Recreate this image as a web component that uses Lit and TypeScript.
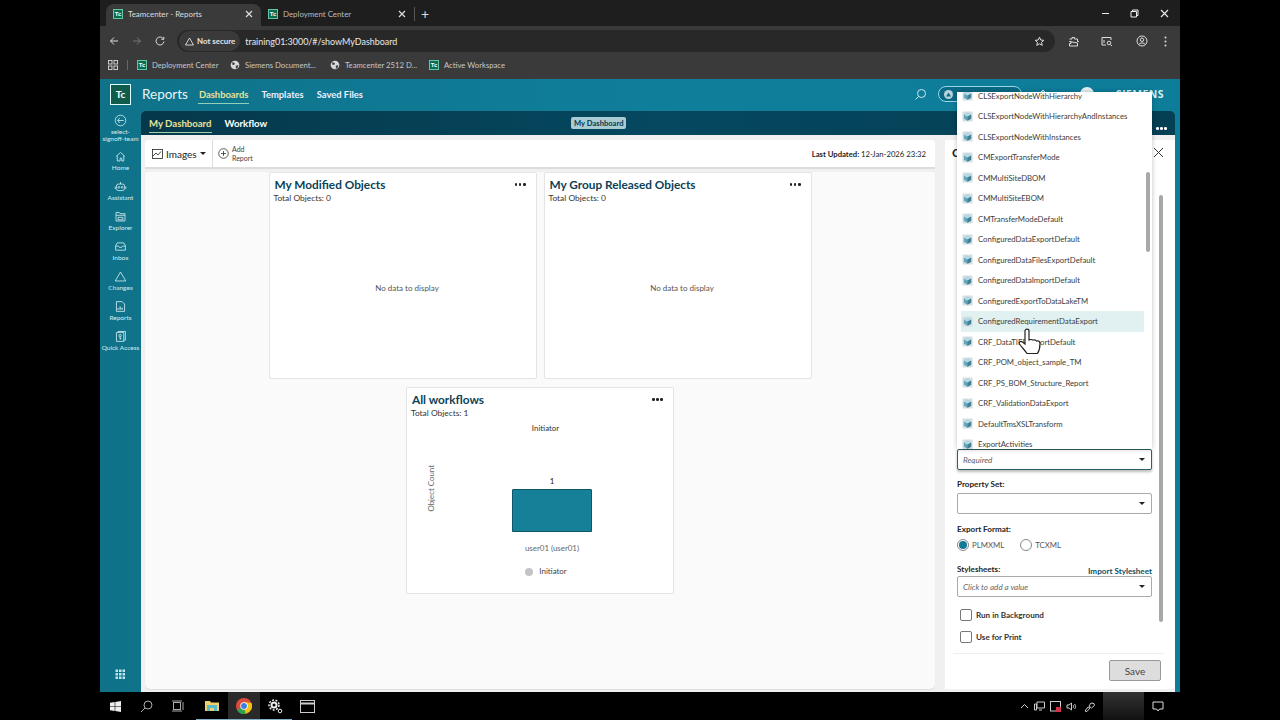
import { LitElement, html, css, svg } from "lit";
import { customElement } from "lit/decorators.js";

const tcIcon = (s: number) => html`<span class="tc" style="width:${s}px;height:${s}px"><i>Tc</i></span>`;
const globe = html`<svg class="b-ic" viewBox="0 0 12 12"><circle cx="6" cy="6" r="5.2" fill="#d8d8d8"/><path d="M3 2.5l3 1.5-1 2-2.5-.5zM7 7l3-1-1 3.5-2 1z" fill="#3c3c3c"/></svg>`;

const items = [
  "CLSExportNodeWithHierarchy","CLSExportNodeWithHierarchyAndInstances","CLSExportNodeWithInstances","CMExportTransferMode",
  "CMMultiSiteDBOM","CMMultiSiteEBOM","CMTransferModeDefault","ConfiguredDataExportDefault","ConfiguredDataFilesExportDefault",
  "ConfiguredDataImportDefault","ConfiguredExportToDataLakeTM","ConfiguredRequirementDataExport","CRF_DataTIERExportDefault",
  "CRF_POM_object_sample_TM","CRF_PS_BOM_Structure_Report","CRF_ValidationDataExport","DefaultTmsXSLTransform","ExportActivities",
];

const stroke = (p: unknown) => html`<svg class="nav-ic" viewBox="0 0 16 16" fill="none" stroke="#d5eef3" stroke-width="1">${p}</svg>`;
const nav = [
  ["Home", stroke(svg`<path d="M2.5 8L8 3l5.5 5M4 7v6.5h3.5V10h2v3.5H12V7"/>`)],
  ["Assistant", stroke(svg`<rect x="3" y="5" width="10" height="8" rx="2.5"/><circle cx="6" cy="9" r="1"/><circle cx="10" cy="9" r="1"/><path d="M8 5V2.5M1.5 8v3M14.500 8v3"/>`)],
  ["Explorer", stroke(svg`<path d="M2.500 13.500V3h4l1 1.500h6v9z"/><path d="M2.500 6.500h11M5 9h6v3H5z"/>`)],
  ["Inbox", stroke(svg`<path d="M2 7l2-3.500h8L14 7v5.500H2zM2 7.500h3.500l1 1.500h3l1-1.500H14"/>`)],
  ["Changes", stroke(svg`<path d="M8 2.500l6.500 11h-13z"/>`)],
  ["Reports", stroke(svg`<path d="M3 14V2h7l3 3v9z"/><path d="M5 12v-2M7.500 12V8M10 12V9.500" stroke-width="1.400"/>`)],
  ["Quick Access", stroke(svg`<path d="M3 3h9v11H3zM5 3V1.800h9v10.700h-2"/><circle cx="7.500" cy="7" r="1.500"/><path d="M7.500 8.500V12M7.500 10.500h1.500"/>`)],
] as const;

const cube = html`<svg class="cube" viewBox="0 0 12 12"><rect x=".5" y=".5" width="11" height="11" rx="1" fill="#d3dfe3"/><path d="M6 2l4 2v4.500L6 10.500 2 8.500V4z" fill="#6aa5b8"/><path d="M6 2l4 2-4 2-4-2z" fill="#b6dbe5"/><path d="M6 6l4-2v4.500L6 10.500z" fill="#3f8199"/></svg>`;
const caret = html`<span class="caret"></span>`;
const dots = html`<span class="dots"><b></b><b></b><b></b></span>`;

@customElement("app-root")
export class AppRoot extends LitElement {
  static styles = css`
    :host { display: block; width: 1280px; height: 720px; background: #000; overflow: hidden; font-family: Lato, "Open Sans", "Liberation Sans", sans-serif; }
    .screen { position: relative; width: 1080px; height: 720px; margin-left: 100px; display: flex; flex-direction: column; }
    svg { display: block; flex: none; }

    .tabs { height: 26px; background: #1e1e1e; display: flex; align-items: flex-end; padding-left: 6px; color: #ddd; font-size: 7.900px; }
    .tab { width: 155px; height: 22px; display: flex; align-items: center; padding: 0 8px 3px 7px; box-sizing: border-box; gap: 5px; border-radius: 8px 8px 0 0; }
    .tab.on { background: #3a3a3a; }
    .tab .t { flex: 1; }
    .tab.off { width: 153px; color: #bbb; }
    .x { width: 8px; height: 8px; }
    .plus { color: #ddd; font-size: 14px; line-height: 14px; margin: 0 0 5px 0; padding-left: 6px; border-left: 1px solid #555; }
    .tc { display: inline-flex; flex: none; align-items: center; justify-content: center; background: #0d6b50; border: 1px solid #63c6a8; box-sizing: border-box; color: #fff; }
    .tc i { font: 700 6px "Liberation Sans", sans-serif; }
    .winbtns { margin-left: auto; display: flex; align-items: center; height: 26px; align-self: flex-start; padding-right: 1px; }
    .winbtns span { width: 29.500px; display: flex; justify-content: center; }

    .addr { height: 26px; box-sizing: border-box; padding: 4px 7px 0 9px; background: #3a3a3a; display: flex; align-items: center; color: #ddd; }
    .addr .nv { width: 23px; flex: none; }
    .pill { flex: 1; height: 22px; margin-left: -1px; background: #282828; border-radius: 11px; display: flex; align-items: center; font-size: 8.950px; padding-right: 10px; }
    .secure { height: 20px; display: flex; align-items: center; gap: 3px; background: #3a3a3a; border-radius: 10px; padding: 0 5px 0 6px; margin: 0 5px 0 2px; font-weight: 700; font-size: 7.900px; color: #e4e4e4; }
    .url { flex: 1; color: #e8e8e8; }
    .tools { display: flex; align-items: center; margin-left: 4px; }
    .tools span { display: flex; justify-content: center; }

    .marks { height: 27px; box-sizing: border-box; padding: 0 0 2px 8px; background: #3a3a3a; display: flex; align-items: center; font-size: 7.700px; color: #c8c8c8; }
    .mark { display: flex; align-items: center; gap: 5px; }
    .b-ic { width: 10px; height: 10px; }
    .sep { width: 1px; height: 10px; background: #666; margin: 0 9px; }

    .app { flex: 1; min-height: 0; display: flex; flex-direction: column; background: linear-gradient(90deg, #0f7289 0%, #0f7e9b 50%, #0d7d99 100%); color: #222; }
    .head { height: 32px; box-sizing: border-box; padding: 0 0 2px 10px; display: flex; align-items: center; color: #fff; flex: none; }
    .logo { width: 21px; height: 21px; font-size: 10px; display: flex; align-items: center; justify-content: center; background: #0f5c4c; border: 1px solid #dff; box-sizing: border-box; font-weight: 700; }
    .title { font-size: 13.500px; margin: 0 10px 0 11px; color: #e8f5f8; }
    .hnav { font-size: 9.400px; font-weight: 700; margin-right: 11px; padding: 4px 1px 3px; color: #eef; }
    .hnav.on { color: #e6e29a; border-bottom: 1.500px solid #8fd2b6; }
    .hright { margin-left: auto; display: flex; align-items: center; padding-right: 16px; }
    .proj { width: 84px; height: 16px; border: 1px solid #9ad6e6; border-radius: 9px; background: #0b6a85; margin-left: 11px; box-sizing: border-box; display: flex; align-items: center; padding-left: 5px; }
    .bell { margin-left: 16px; }
    .avatar { width: 14px; height: 14px; border-radius: 50%; background: #e6f2f5; margin: 0 22px 0 32px; }
    .siemens { font: 700 10.500px "Open Sans", sans-serif; color: #d8f0f5; letter-spacing: .4px; }

    .body { flex: 1; min-height: 0; display: flex; }
    .side { width: 41px; flex: none; display: flex; flex-direction: column; align-items: center; color: #d5eef3; font-size: 6.500px; line-height: 8px; text-align: center; padding-bottom: 12px; box-sizing: border-box; }
    .nv-item { display: flex; flex-direction: column; align-items: center; height: 30px; white-space: nowrap; }
    .nv-item.back { height: 36px; white-space: normal; margin-top: 3px; line-height: 7px; }
    .nav-ic { width: 13px; height: 13px; margin-bottom: 1px; }
    .grid { margin-top: auto; width: 11px; height: 11px; }

    .main { flex: 1; min-width: 0; display: flex; flex-direction: column; padding-right: 5px; }
    .sub { height: 24px; flex: none; background: linear-gradient(90deg, #06384b, #05485f 50%, #053f54); border-radius: 5px 5px 0 0; display: grid; grid-template-columns: 422px auto 1fr; align-items: center; color: #fff; padding: 0 8px 0 8px; }
    .subl { display: flex; gap: 13px; font-size: 9.600px; font-weight: 700; }
    .subl span { padding: 4px 0 3px; }
    .subl .on { color: #e6e29a; border-bottom: 1px solid #a0d0a8; }
    .chip { background: #a9cbd3; color: #06384b; font-size: 7.600px; font-weight: 700; padding: 1px 3px; border-radius: 2px; }
    .subr { justify-self: end; }
    .dots { display: inline-flex; gap: 1.500px; }
    .dots b { width: 2.600px; height: 2.600px; border-radius: 50%; background: currentColor; }
    .work { flex: 1; min-height: 0; background: #f1f0f0; display: flex; padding: 5px 0 3px 4px; gap: 10px; }

    .left { width: 790px; flex: none; display: flex; flex-direction: column; }
    .bar { height: 27px; flex: none; background: #fff; display: flex; align-items: center; border-bottom: 2px solid #dcdcdc; border-radius: 4px 4px 0 0; }
    .imgs { width: 68px; height: 100%; display: flex; align-items: center; gap: 3px; padding-left: 7px; box-sizing: border-box; font-size: 10px; border-right: 1px solid #ddd; color: #222; }
    .add { display: flex; align-items: center; gap: 3px; padding-left: 5px; font-size: 7px; line-height: 9px; color: #444; }
    .updated { margin-left: auto; font-size: 7.700px; font-weight: 700; color: #222; padding-right: 9px; }
    .updated em { font-style: normal; font-weight: 400; }
    .caret { width: 0; height: 0; border: 3px solid transparent; border-top: 3.500px solid #222; border-bottom: 0; }
    .dash { flex: 1; min-height: 0; margin-top: 3px; background: #fbfafa; border-radius: 0 0 5px 5px; display: flex; flex-wrap: wrap; justify-content: center; align-content: flex-start; gap: 8px 7px; box-shadow: 0 1px 1px #ddd; }
    .card { width: 268px; height: 207px; box-sizing: border-box; background: #fff; border: 1px solid #e4e4e4; border-radius: 2px; padding: 5px 10px 0 4px; display: flex; flex-direction: column; }
    .card h3 { margin: 0; padding-left: 1px; font-size: 11.800px; line-height: 14px; font-weight: 700; color: #0b4257; display: flex; justify-content: space-between; align-items: center; }
    .card h3 .dots { color: #222; margin-top: -1px; }
    .total { font-size: 8.400px; line-height: 11px; color: #333; margin-top: 1px; }
    .none { flex: 1; display: flex; align-items: center; justify-content: center; font-size: 8px; color: #555; padding: 0 0 6px 15px; }
    .chart { flex: 1; display: grid; grid-template-columns: 27px 1fr; grid-template-rows: auto 1fr; font-size: 7.900px; color: #555; }
    .chart-t { grid-column: 1 / 3; text-align: center; color: #333; margin: 3px 0 0 17px; line-height: 12px; }
    .ylab { writing-mode: vertical-rl; transform: rotate(180deg); align-self: start; margin: 31px 2px 0 0; justify-self: end; white-space: nowrap; line-height: 10px; color: #666; }
    .plot { display: flex; flex-direction: column; align-items: center; padding: 42px 0 0 74px; width: 80px; }
    .one { color: #222; line-height: 11px; }
    .rect { width: 80px; height: 43px; flex: none; background: #178099; border: 1px solid #0f566b; box-sizing: border-box; border-radius: 1px 1px 0 0; margin-top: 2px; }
    .ulab { margin-top: 11px; white-space: nowrap; line-height: 11px; color: #666; }
    .leg { margin-top: 12px; display: flex; align-items: center; gap: 6px; color: #444; line-height: 11px; margin-left: -12px; white-space: nowrap; }
    .leg i { width: 8px; height: 8px; border-radius: 50%; background: #c4c4c4; }

    .right { flex: 1; min-width: 0; background: #fff; position: relative; padding: 4px 11px 8px 12px; display: flex; flex-direction: column; box-sizing: border-box; }
    .rhead { display: flex; justify-content: space-between; align-items: center; height: 16px; margin-left: -5px; font-weight: 700; font-size: 12px; color: #222; }
    .spacer { flex: 1; }
    .form { width: 195px; font-size: 8.100px; font-weight: 700; color: #222; }
    .sel { height: 21px; box-sizing: border-box; border: 1px solid #aaa; border-radius: 2px; display: flex; align-items: center; justify-content: space-between; padding: 0 6px 0 5px; font-weight: 400; font-style: italic; color: #666; background: #fff; }
    .sel.focus { border: 1px solid #2f5f66; box-shadow: 0 2px 3px #bbb; }
    .lab { line-height: 11px; margin: 9px 0 3px; display: flex; justify-content: space-between; align-items: flex-end; }
    .lab a { font-weight: 700; color: #0b4f64; margin-bottom: -2px; }
    .lab.exp { margin-top: 10px; }
    .lab.sty { margin: 14px 0 1px; }
    .radios { display: flex; align-items: center; margin: 4px 0 -1px; font-size: 7.800px; font-weight: 400; color: #555; }
    .radio { width: 12px; height: 12px; border: 1px solid #888; border-radius: 50%; box-sizing: border-box; margin-right: 3px; display: flex; align-items: center; justify-content: center; }
    .radio.on::after { content: ""; width: 8px; height: 8px; border-radius: 50%; background: #157a96; }
    .rd2 { margin-left: 16px; }
    .chk { display: flex; align-items: center; gap: 4px; margin: 12px 0 0 3px; line-height: 12px; color: #333; }
    .chk i { width: 12px; height: 12px; border: 1px solid #777; border-radius: 2px; box-sizing: border-box; }
    .chk + .chk { margin-top: 10px; }
    .rule { height: 1px; background: #eee; margin-top: 10px; margin-left: -4px; }
    .footer { display: flex; justify-content: flex-end; margin: 6px 3px 0 0; }
    .save { width: 52px; height: 21px; background: #ddd; border: 1px solid #999; border-radius: 2px; font-size: 10px; color: #444; display: flex; align-items: center; justify-content: center; box-sizing: border-box; }
    .pscroll { position: absolute; left: 214px; top: 55px; width: 4px; height: 427px; background: #a8a8a8; border-radius: 2px; }

    .menu { position: absolute; left: 857px; top: 92px; width: 195px; height: 357px; background: #fff; overflow: hidden; box-shadow: 0 0 5px rgba(0,0,0,.25); padding: 0 8px 0 4px; box-sizing: border-box; font-size: 7.750px; color: #3c3c3c; }
    .rows { margin-top: -6.500px; }
    .row { height: 20.500px; display: flex; align-items: center; gap: 5px; padding-left: 1px; white-space: nowrap; }
    .row.hot { background: #e1f1f1; }
    .cube { width: 11px; height: 11px; }
    .mscroll { position: absolute; right: 2px; top: 80px; width: 4px; height: 80px; background: #a8a8a8; border-radius: 2px; }
    .hand { position: absolute; left: 918px; top: 328px; width: 24px; height: 30px; }

    .task { height: 28px; flex: none; background: #000; display: flex; align-items: center; color: #ddd; }
    .tk { width: 32px; height: 28px; display: flex; align-items: center; justify-content: center; box-sizing: border-box; }
    .tk.act { background: #2a2a2a; }
    .tk.run { box-shadow: inset 0 -1px #7fb0c8; }
    .tk.nar { width: 30px; }
    .tk.gap { margin-left: 3.500px; }
    .tray { margin-left: auto; display: flex; align-items: center; gap: 5px; padding-right: 16px; }
    .tray .pen { margin-left: 2px; }
    .tray .blur { width: 41px; height: 28px; background: linear-gradient(180deg, #333, #111); margin: 0 3px; }
  `;

  private card(title: string, total: string, body: unknown) {
    return html`<div class="card"><h3>${title}${dots}</h3><div class="total">Total Objects: ${total}</div>${body}</div>`;
  }

  render() {
    const x = html`<svg class="x" viewBox="0 0 8 8" stroke="#ddd" stroke-width="1.200"><path d="M1 1l6 6M7 1L1 7"/></svg>`;
    const none = html`<div class="none">No data to display</div>`;
    return html`<div class="screen">
      <div class="tabs">
        <div class="tab on">${tcIcon(10)}<span class="t">Teamcenter - Reports</span>${x}</div>
        <div class="tab off">${tcIcon(10)}<span class="t">Deployment Center</span>${x}</div>
        <span class="plus">+</span>
        <div class="winbtns">
          <span><svg width="9" height="9" viewBox="0 0 9 9" stroke="#eee"><path d="M1 4.500h7"/></svg></span>
          <span><svg width="9" height="9" viewBox="0 0 9 9" fill="none" stroke="#eee"><path d="M1 2.500h5.500V8H1zM2.500 2.500V1H8v5.500H6.500"/></svg></span>
          <span><svg width="9" height="9" viewBox="0 0 9 9" stroke="#eee" stroke-width="1.100"><path d="M1 1l7 7M8 1L1 8"/></svg></span>
        </div>
      </div>
      <div class="addr">
        <span class="nv"><svg width="10" height="10" viewBox="0 0 10 10" fill="none" stroke="#ddd"><path d="M9 5H1.500M5 1.500L1.500 5 5 8.500"/></svg></span>
        <span class="nv"><svg width="10" height="10" viewBox="0 0 10 10" fill="none" stroke="#777"><path d="M1 5h7.500M5 1.500L8.500 5 5 8.500"/></svg></span>
        <span class="nv"><svg width="10" height="10" viewBox="0 0 10 10" fill="none" stroke="#ddd"><path d="M8.500 3A4 4 0 1 0 9 5.500M8.800 .8V3.300H6.300"/></svg></span>
        <div class="pill">
          <span class="secure"><svg width="9" height="9" viewBox="0 0 9 9" fill="none" stroke="#e4e4e4" stroke-width=".9"><path d="M4.500 1L8.500 8H.5z"/></svg>Not secure</span>
          <span class="url">training01:3000/#/showMyDashboard</span>
          <svg width="11" height="11" viewBox="0 0 12 12" fill="none" stroke="#eee"><path d="M6 1.300l1.400 3.100 3.300.3-2.500 2.200.8 3.300L6 8.500l-3 1.700.8-3.300L1.300 4.700l3.300-.3z"/></svg>
        </div>
        <div class="tools">
          <span style="width:28px"><svg width="11" height="11" viewBox="0 0 11 11" fill="none" stroke="#ddd"><path d="M1.500 3h2.500V1.500h2.500V3h3v2.500H11M9.500 7v3h-8V7.500H3V5.500H1.500z"/></svg></span>
          <span style="width:40px"><svg width="12" height="11" viewBox="0 0 12 11" fill="none" stroke="#ddd"><path d="M5 9H1V1.500h9V4"/><circle cx="8" cy="7" r="1.800"/><path d="M9.500 8.500L11 10M3 4v3"/></svg></span>
          <span style="width:30px"><svg width="12" height="12" viewBox="0 0 12 12" fill="none" stroke="#ddd"><circle cx="6" cy="6" r="5"/><circle cx="6" cy="4.800" r="1.700"/><path d="M2.800 9.500c1-2 5.400-2 6.400 0"/></svg></span>
          <span style="width:16px"><svg width="3" height="11" viewBox="0 0 3 11" fill="#ddd"><circle cx="1.500" cy="1.500" r="1"/><circle cx="1.500" cy="5.500" r="1"/><circle cx="1.500" cy="9.500" r="1"/></svg></span>
        </div>
      </div>
      <div class="marks">
        <svg width="10" height="10" viewBox="0 0 10 10" fill="none" stroke="#ccc"><rect x=".5" y=".5" width="3.500" height="3.500"/><rect x="6" y=".5" width="3.500" height="3.500"/><rect x=".5" y="6" width="3.500" height="3.500"/><rect x="6" y="6" width="3.500" height="3.500"/></svg>
        <span class="sep"></span>
        <span class="mark" style="width:93px">${tcIcon(10)}Deployment Center</span>
        <span class="mark" style="width:100px">${globe}Siemens Document...</span>
        <span class="mark" style="width:99px">${globe}Teamcenter 2512 D...</span>
        <span class="mark">${tcIcon(10)}Active Workspace</span>
      </div>
      <div class="app">
        <div class="head">
          <span class="logo">Tc</span>
          <span class="title">Reports</span>
          <span class="hnav on">Dashboards</span>
          <span class="hnav">Templates</span>
          <span class="hnav">Saved Files</span>
          <div class="hright">
            <svg width="13" height="13" viewBox="0 0 13 13" fill="none" stroke="#cdeaf2"><circle cx="7.500" cy="5.500" r="4"/><path d="M4.500 8.500L1.500 11.500"/></svg>
            <span class="proj"><svg width="9" height="9" viewBox="0 0 9 9"><circle cx="4.500" cy="4.500" r="4.500" fill="#b8d3da"/><path d="M2 6.500l2.500-4 2.500 4z" fill="#0b6a85"/></svg></span>
            <svg class="bell" width="10" height="10" viewBox="0 0 10 10" fill="none" stroke="#cdeaf2"><path d="M5 1v8M2 4l3-3 3 3"/></svg>
            <span class="avatar"></span>
            <span class="siemens">SIEMENS</span>
          </div>
        </div>
        <div class="body">
          <div class="side">
            <div class="nv-item back">
              <svg class="nav-ic" viewBox="0 0 16 16" fill="none" stroke="#d5eef3"><circle cx="8" cy="8" r="6.500"/><path d="M12 8H4.500M7 5L4.500 8 7 11"/></svg>
              select-<br />signoff-team
            </div>
            ${nav.map(([n, ic]) => html`<div class="nv-item">${ic}${n}</div>`)}
            <svg class="grid" viewBox="0 0 11 11" fill="#bfe4ec">
              ${[0.5, 4, 7.5].flatMap((a) => [0.5, 4, 7.5].map((b) => svg`<rect x="${a}" y="${b}" width="2.500" height="2.500"/>`))}
            </svg>
          </div>
          <div class="main">
            <div class="sub">
              <div class="subl"><span class="on">My Dashboard</span><span>Workflow</span></div>
              <span class="chip">My Dashboard</span>
              <span class="subr">${dots}</span>
            </div>
            <div class="work">
              <div class="left">
                <div class="bar">
                  <div class="imgs">
                    <svg width="11" height="10" viewBox="0 0 11 10" fill="none" stroke="#222" stroke-width=".8"><rect x=".5" y=".5" width="10" height="9"/><path d="M1 7l3-3 2 2 3-3.500"/></svg>
                    Images ${caret}
                  </div>
                  <div class="add">
                    <svg width="11" height="11" viewBox="0 0 11 11" fill="none" stroke="#333" stroke-width=".8"><circle cx="5.500" cy="5.500" r="4.800"/><path d="M5.500 3v5M3 5.500h5"/></svg>
                    <span>Add<br />Report</span>
                  </div>
                  <div class="updated">Last Updated: <em>12-Jan-2026 23:32</em></div>
                </div>
                <div class="dash">
                  ${this.card("My Modified Objects", "0", none)}
                  ${this.card("My Group Released Objects", "0", none)}
                  ${this.card("All workflows", "1", html`<div class="chart">
                    <div class="chart-t">Initiator</div>
                    <div class="ylab">Object Count</div>
                    <div class="plot">
                      <span class="one">1</span>
                      <div class="rect"></div>
                      <span class="ulab">user01 (user01)</span>
                      <span class="leg"><i></i>Initiator</span>
                    </div>
                  </div>`)}
                </div>
              </div>
              <div class="right">
                <div class="rhead"><span>C</span><svg width="11" height="11" viewBox="0 0 11 11" stroke="#333"><path d="M1 1l9 9M10 1L1 10"/></svg></div>
                <div class="spacer"></div>
                <div class="form">
                  <div class="sel focus"><span>Required</span>${caret}</div>
                  <div class="lab">Property Set:</div>
                  <div class="sel"><span></span>${caret}</div>
                  <div class="lab exp">Export Format:</div>
                  <div class="radios"><span class="radio on"></span>PLMXML<span class="radio rd2"></span>TCXML</div>
                  <div class="lab sty">Stylesheets:<a>Import Stylesheet</a></div>
                  <div class="sel"><span>Click to add a value</span>${caret}</div>
                  <label class="chk"><i></i>Run in Background</label>
                  <label class="chk"><i></i>Use for Print</label>
                </div>
                <div class="rule"></div>
                <div class="footer"><span class="save">Save</span></div>
                <div class="pscroll"></div>
              </div>
            </div>
          </div>
        </div>
      </div>
      <div class="task">
        <span class="tk nar"><svg width="11" height="11" viewBox="0 0 11 11" fill="#eee"><path d="M0 1.800L4.700 1v4.200H0zM5.300 1L11 0v5.200H5.300zM0 5.800h4.700V10L0 9.200zM5.300 5.800H11V11l-5.700-1z"/></svg></span>
        <span class="tk"><svg width="13" height="13" viewBox="0 0 13 13" fill="none" stroke="#aaa"><circle cx="8" cy="5" r="4"/><path d="M5 8l-4 4"/></svg></span>
        <span class="tk nar"><svg width="13" height="12" viewBox="0 0 13 12" fill="none" stroke="#aaa"><rect x="2.500" y="2.500" width="7" height="7"/><path d="M1 1h10M1 11h10M12 2v8"/></svg></span>
        <span class="tk gap run"><svg width="14" height="12" viewBox="0 0 14 12"><path d="M0 1h5l1 1.500h8V11H0z" fill="#f0cf6a"/><path d="M2 5h10v6H9V8H5v3H2z" fill="#5bb8c8"/></svg></span>
        <span class="tk act run"><svg width="16" height="16" viewBox="0 0 16 16"><circle cx="8" cy="8" r="8" fill="#dd4b3e"/><path d="M8 8L1.100 12a8 8 0 0 0 8.500 3.800z" fill="#2ba24c"/><path d="M8 8l1.600 7.800A8 8 0 0 0 15.500 5L8 4z" fill="#f4c20d"/><circle cx="8" cy="8" r="3.700" fill="#fff"/><circle cx="8" cy="8" r="2.900" fill="#3a7de8"/></svg></span>
        <span class="tk run"><svg width="15" height="15" viewBox="0 0 15 15" fill="none" stroke="#eee"><circle cx="6" cy="6" r="2.500" stroke-width="2"/><circle cx="6" cy="6" r="5" stroke-dasharray="2 1.500" stroke-width="1.500"/><circle cx="12" cy="12" r="1.800"/></svg></span>
        <span class="tk"><svg width="15" height="13" viewBox="0 0 15 13" fill="none" stroke="#ccc"><rect x=".5" y=".5" width="14" height="12"/><path d="M1 3.500h13" stroke-width="2"/></svg></span>
        <div class="tray">
          <svg width="9" height="9" viewBox="0 0 9 9" fill="none" stroke="#ccc"><path d="M1 6l3.500-3.500L8 6"/></svg>
          <svg width="11" height="10" viewBox="0 0 11 10" fill="none" stroke="#ccc"><path d="M3 1h7.500v6H3zM.5 3h2v6h-2zM5 9h3"/></svg>
          <svg width="11" height="11" viewBox="0 0 11 11"><rect x=".5" y=".5" width="10" height="9.500" fill="none" stroke="#ccc"/><rect x="6" y="6" width="5" height="5" fill="#d0344a"/></svg>
          <svg width="11" height="9" viewBox="0 0 11 9" fill="none" stroke="#ccc"><path d="M1 3h2l2.500-2v7L3 6H1zM7 3c.8.8.8 2.200 0 3M8.500 2c1.400 1.400 1.400 3.600 0 5"/></svg>
          <svg class="pen" width="11" height="11" viewBox="0 0 11 11" fill="none" stroke="#ccc"><path d="M1 10l3-4 2 1-3 3.500zM5 5l2-3 3 .5.500 2-3 2.500z"/></svg>
          <span class="blur"></span>
          <svg width="12" height="11" viewBox="0 0 12 11" fill="none" stroke="#ddd"><path d="M1 1h10v7H7.500L6 10 4.500 8H1z"/></svg>
        </div>
      </div>

      <div class="menu">
        <div class="rows">
          ${items.map((t, i) => html`<div class="row ${i === 11 ? "hot" : ""}">${cube}<span>${t}</span></div>`)}
        </div>
        <div class="mscroll"></div>
      </div>
      <svg class="hand" viewBox="0 0 24 30" fill="#fff" stroke="#222" stroke-width="1.200"><path d="M7 3c0-2.500 4-2.500 4 0v9c2-1 3-.5 4 0 2-.5 3 0 3.500 1 2-.5 3.500.5 3.500 2.500 0 4-.5 7-2.500 10H9c-2-3-5-6-7.500-9.500-1-2 1-3.500 3-2l2.500 2z"/></svg>
    </div>`;
  }
}
